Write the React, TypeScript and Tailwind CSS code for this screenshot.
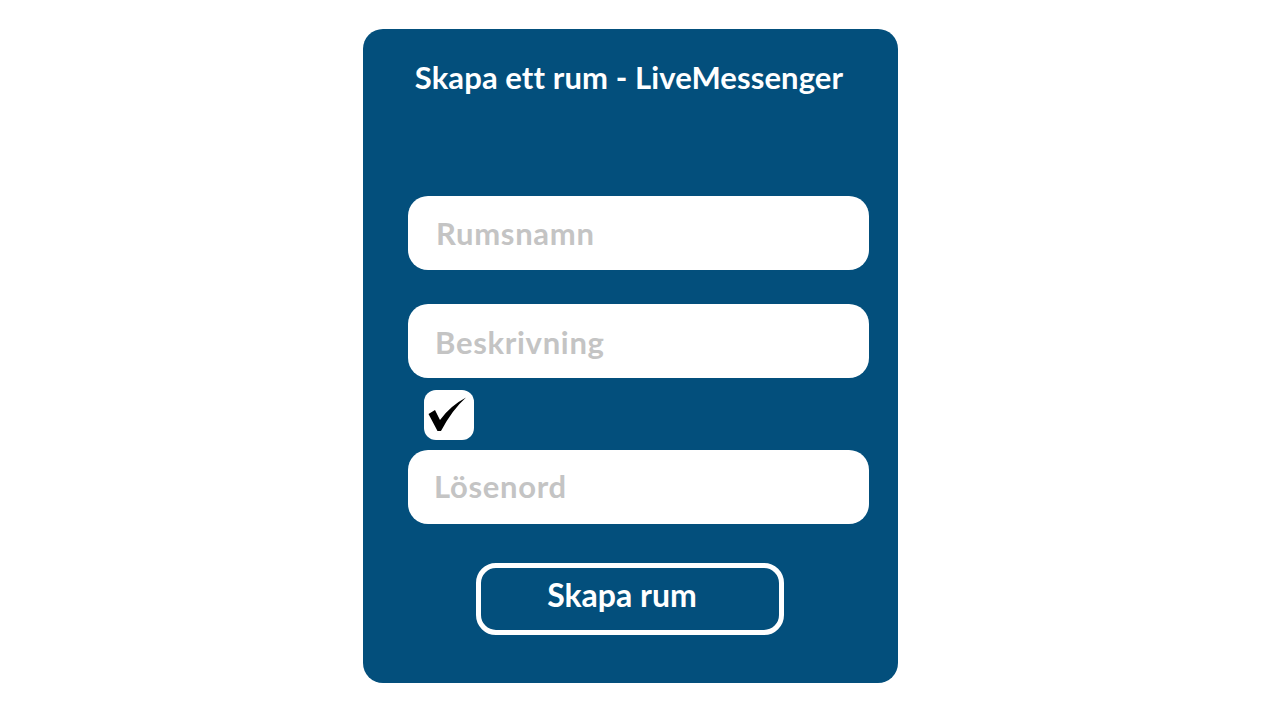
import React from "react";

export default function App() {
  const font = { fontFamily: "Lato, 'Noto Sans', sans-serif" };
  return (
    <div className="w-[1280px] h-[720px] bg-white pt-[29px] pl-[363px] [font-variant-ligatures:none]" style={font}>
      <div className="w-[535px] h-[654px] bg-[#034f7c] rounded-[20px] flex flex-col">
        <h1 className="mt-[28px] h-[40px] leading-[40px] text-[31px] tracking-[0.1px] font-bold text-white text-center pr-[3px]">
          Skapa ett rum - LiveMessenger
        </h1>
        <div className="mt-[99px] w-[461px] ml-[45px] flex flex-col">
          <input
            placeholder="Rumsnamn"
            className="h-[74px] w-full rounded-[20px] bg-white px-[28px] pb-[1px] text-[31px] tracking-[0.7px] font-bold text-gray-800 placeholder:text-[#c4c4c4] outline-none"
          />
          <input
            placeholder="Beskrivning"
            className="mt-[34px] h-[74px] w-full rounded-[20px] bg-white px-[27px] pt-[1px] text-[31px] tracking-[0.7px] font-bold text-gray-800 placeholder:text-[#c4c4c4] outline-none"
          />
          <div className="mt-[12px] ml-[16px] w-[50px] h-[50px] rounded-[12px] bg-white overflow-hidden">
            <svg width="50" height="50" viewBox="0 0 50 50">
              <path d="M4.5 24 L11 20 L16 30 Q26 16 42 7.5 Q28 20 17 41 L13.5 41 Z" fill="#000" />
            </svg>
          </div>
          <input
            placeholder="Lösenord"
            className="mt-[10px] h-[74px] w-full rounded-[20px] bg-white px-[26px] pb-[3px] text-[31px] tracking-[0.7px] font-bold text-gray-800 placeholder:text-[#c4c4c4] outline-none"
          />
        </div>
        <button className="mt-[39px] ml-[113px] w-[308px] h-[72px] rounded-[20px] border-[5px] border-white text-white text-[32px] font-bold pr-[16px] pb-[8px]">
          Skapa rum
        </button>
      </div>
    </div>
  );
}
